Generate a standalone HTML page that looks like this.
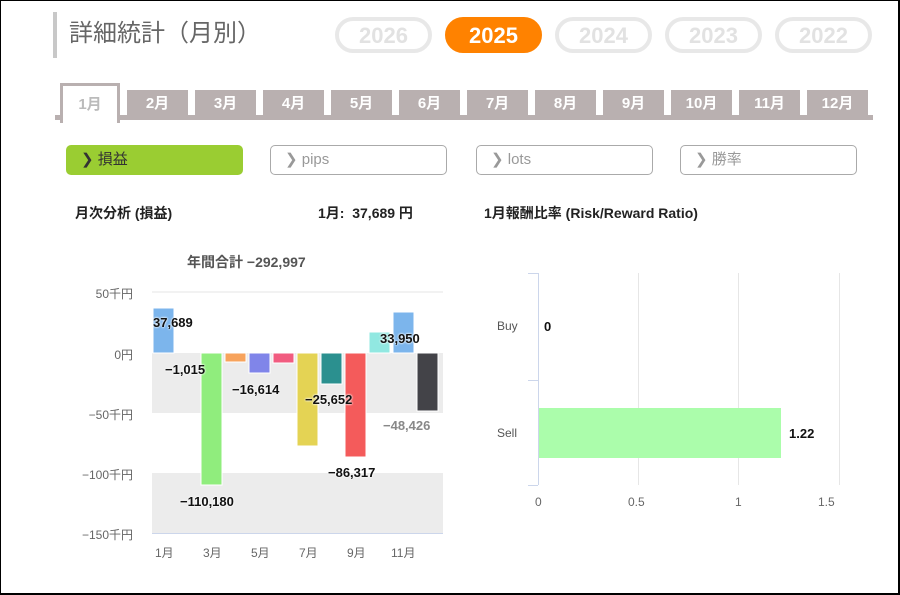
<!DOCTYPE html>
<html><head><meta charset="utf-8"><style>
body{margin:0;width:900px;height:595px;overflow:hidden;background:#fff;font-family:"Liberation Sans","Noto Sans CJK JP",sans-serif;}
.frame{position:absolute;left:0;top:0;width:897px;height:592px;border:1px solid #000;border-right:2px solid #000;border-bottom:2px solid #000;}
.a{position:absolute;}
.title{left:53px;top:12px;height:46px;border-left:4px solid #c8c8c8;padding-left:12px;font-size:24px;line-height:44px;color:#666;}
.pill{top:17px;width:89px;height:28px;border:4px solid #e8e8e8;border-radius:20px;text-align:center;font-weight:bold;font-size:22px;line-height:29px;color:#e2e2e2;}
.pill.on{background:#ff8200;border-color:#ff8200;color:#fff;}
.tab{top:90px;width:61px;height:26px;background:#b9b0b0;color:#fff;font-weight:bold;font-size:15px;text-align:center;line-height:27px;}
.btn{top:145px;width:175px;height:28px;border:1.5px solid #aaa;border-radius:5px;font-size:15px;line-height:28px;color:#999;padding-left:0;box-sizing:content-box;}
.btn span{margin-left:14px;}
.h{top:203px;font-weight:bold;font-size:14px;color:#222;}
.yl{font-size:12px;color:#666;text-align:right;width:60px;left:73px;}
.dl{font-size:13px;font-weight:bold;color:#111;text-shadow:0 0 2px #fff,0 0 2px #fff;}
.xl{font-size:12px;color:#666;top:544px;}
</style></head><body>
<div class="frame"></div>
<div class="a title">詳細統計（月別）</div>
<div class="a pill" style="left:335px">2026</div>
<div class="a pill on" style="left:445px">2025</div>
<div class="a pill" style="left:555px">2024</div>
<div class="a pill" style="left:665px">2023</div>
<div class="a pill" style="left:775px">2022</div>

<div class="a" style="left:55px;top:115px;width:818px;height:5px;background:#b9b0b0"></div>
<div class="a" style="left:60px;top:83px;width:54px;height:37px;border:3px solid #b9b0b0;border-bottom:none;background:#fff;color:#bbb;font-weight:bold;font-size:15px;text-align:center;line-height:38px">1月</div>
<div class="a tab" style="left:127px">2月</div>
<div class="a tab" style="left:195px">3月</div>
<div class="a tab" style="left:263px">4月</div>
<div class="a tab" style="left:331px">5月</div>
<div class="a tab" style="left:399px">6月</div>
<div class="a tab" style="left:467px">7月</div>
<div class="a tab" style="left:535px">8月</div>
<div class="a tab" style="left:603px">9月</div>
<div class="a tab" style="left:671px">10月</div>
<div class="a tab" style="left:739px">11月</div>
<div class="a tab" style="left:807px">12月</div>

<div class="a btn" style="left:66px;background:#9acd32;border-color:#9acd32;color:#333"><span>❯ 損益</span></div>
<div class="a btn" style="left:270px"><span>❯ pips</span></div>
<div class="a btn" style="left:476px"><span>❯ lots</span></div>
<div class="a btn" style="left:680px"><span>❯ 勝率</span></div>

<div class="a h" style="left:75px">月次分析 (損益)</div>
<div class="a h" style="left:318px">1月:&nbsp; 37,689 円</div>
<div class="a h" style="left:484px">1月報酬比率 (Risk/Reward Ratio)</div>

<div class="a" style="left:187px;top:252px;font-size:14px;font-weight:bold;color:#555">年間合計 −292,997</div>

<svg class="a" style="left:0;top:0" width="900" height="595">
<line x1="152" y1="292" x2="443" y2="292" stroke="#e6e6e6"/>
<rect x="152" y="353" width="291" height="60" fill="#ececec"/>
<rect x="152" y="473" width="291" height="60" fill="#ececec"/>
<line x1="152" y1="533.5" x2="443" y2="533.5" stroke="#ccd6eb"/>
<g stroke="#fff" stroke-width="1">
<rect x="153" y="308" width="21" height="45" fill="#7cb5ec"/>
<rect x="201" y="353" width="21" height="132" fill="#90ed7d"/>
<rect x="225" y="353" width="21" height="9" fill="#f7a35c"/>
<rect x="249" y="353" width="21" height="20" fill="#8085e9"/>
<rect x="273" y="353" width="21" height="10" fill="#f15c80"/>
<rect x="297" y="353" width="21" height="93" fill="#e4d354"/>
<rect x="321" y="353" width="21" height="31" fill="#2b908f"/>
<rect x="345" y="353" width="21" height="104" fill="#f45b5b"/>
<rect x="369" y="332" width="21" height="21" fill="#91e8e1"/>
<rect x="393" y="312" width="21" height="41" fill="#7cb5ec"/>
<rect x="417" y="353" width="21" height="58" fill="#434348"/>
</g>
<line x1="538.5" y1="273" x2="538.5" y2="485" stroke="#ccd6eb"/>
<line x1="528" y1="273.5" x2="538" y2="273.5" stroke="#ccd6eb"/>
<line x1="528" y1="380.5" x2="538" y2="380.5" stroke="#ccd6eb"/>
<line x1="528" y1="485.5" x2="538" y2="485.5" stroke="#ccd6eb"/>
<line x1="638.5" y1="273" x2="638.5" y2="485" stroke="#e6e6e6"/>
<line x1="738.5" y1="273" x2="738.5" y2="485" stroke="#e6e6e6"/>
<line x1="839.5" y1="273" x2="839.5" y2="485" stroke="#e6e6e6"/>
<rect x="539" y="408" width="242" height="50" fill="#abfdab"/>
</svg>

<div class="a yl" style="top:285px">50千円</div>
<div class="a yl" style="top:346px">0円</div>
<div class="a yl" style="top:406px">−50千円</div>
<div class="a yl" style="top:466px">−100千円</div>
<div class="a yl" style="top:526px">−150千円</div>

<div class="a dl" style="left:153px;top:315px">37,689</div>
<div class="a dl" style="left:165px;top:362px">−1,015</div>
<div class="a dl" style="left:180px;top:494px">−110,180</div>
<div class="a dl" style="left:232px;top:382px">−16,614</div>
<div class="a dl" style="left:305px;top:392px">−25,652</div>
<div class="a dl" style="left:328px;top:465px">−86,317</div>
<div class="a dl" style="left:380px;top:331px">33,950</div>
<div class="a dl" style="left:383px;top:418px;color:#888">−48,426</div>

<div class="a xl" style="left:155px">1月</div>
<div class="a xl" style="left:203px">3月</div>
<div class="a xl" style="left:251px">5月</div>
<div class="a xl" style="left:299px">7月</div>
<div class="a xl" style="left:347px">9月</div>
<div class="a xl" style="left:391px">11月</div>

<div class="a" style="left:497px;top:319px;font-size:12px;color:#555">Buy</div>
<div class="a" style="left:497px;top:426px;font-size:12px;color:#555">Sell</div>
<div class="a dl" style="left:544px;top:319px">0</div>
<div class="a dl" style="left:789px;top:426px">1.22</div>
<div class="a" style="left:535px;top:495px;font-size:12px;color:#666">0</div>
<div class="a" style="left:628px;top:495px;font-size:12px;color:#666">0.5</div>
<div class="a" style="left:735px;top:495px;font-size:12px;color:#666">1</div>
<div class="a" style="left:818px;top:495px;font-size:12px;color:#666">1.5</div>
</body></html>
